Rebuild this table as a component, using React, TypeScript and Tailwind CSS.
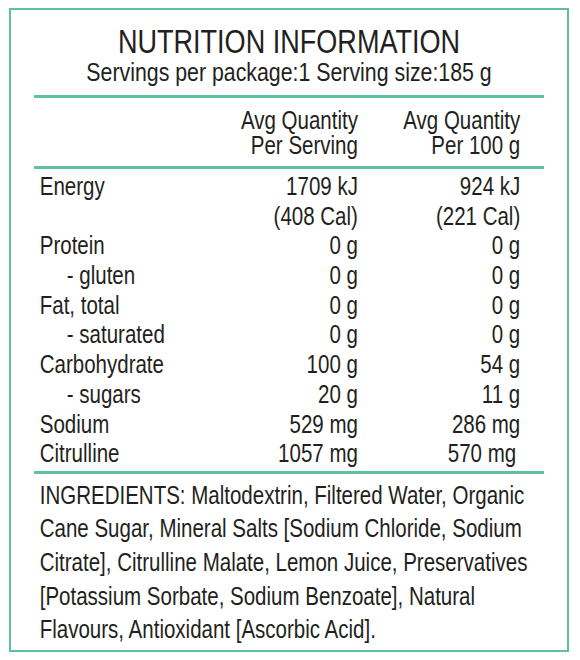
import React from "react";

const rows: { label: string; indent?: boolean; a: string; b: string }[] = [
  { label: "Energy", a: "1709 kJ", b: "924 kJ" },
  { label: "", a: "(408 Cal)", b: "(221 Cal)" },
  { label: "Protein", a: "0 g", b: "0 g" },
  { label: "- gluten", indent: true, a: "0 g", b: "0 g" },
  { label: "Fat, total", a: "0 g", b: "0 g" },
  { label: "- saturated", indent: true, a: "0 g", b: "0 g" },
  { label: "Carbohydrate", a: "100 g", b: "54 g" },
  { label: "- sugars", indent: true, a: "20 g", b: "11 g" },
  { label: "Sodium", a: "529 mg", b: "286 mg" },
  { label: "Citrulline", a: "1057 mg", b: "570 mg" },
];

export default function App() {
  return (
    <div className="w-[580px] h-[660px] bg-white pt-[8px] pl-[9px] text-[#231f20] font-['Liberation_Sans',Arial,sans-serif]">
      <div className="w-[560px] h-[644px] border-2 border-[#5fbf9f] px-[23px] overflow-hidden">
        <div className="w-[622px] origin-left scale-x-[0.82]">
          <div className="pt-[15px] text-center">
            <h1 className="text-[33px] leading-[34px]">NUTRITION INFORMATION</h1>
            <p className="text-[26px] leading-[26px]">Servings per package:1 Serving size:185 g</p>
          </div>
          <div className="mt-[10px] h-[3px] bg-[#5fbf9f]" />
          <div className="grid grid-cols-[1fr_160px_198px] pr-[29px] pt-[10px] text-[25px] leading-[25px]">
            <div />
            <div className="text-right">
              Avg Quantity
              <br />
              Per Serving
            </div>
            <div className="text-right">
              Avg Quantity
              <br />
              Per 100 g
            </div>
          </div>
          <div className="mt-[8px] h-[3px] bg-[#5fbf9f]" />
          <div className="pt-[3px] pr-[29px] text-[25px] leading-[29.7px]">
            {rows.map((r, i) => (
              <div key={i} className="grid grid-cols-[1fr_160px_198px] h-[29.7px]">
                <div className={r.indent ? "pl-[40px]" : "pl-[7px]"}>{r.label}</div>
                <div className="text-right">{r.a}</div>
                <div className={i === rows.length - 1 ? "text-right pr-[5px]" : "text-right"}>{r.b}</div>
              </div>
            ))}
          </div>
          <div className="mt-[2px] h-[3px] bg-[#5fbf9f]" />
          <p className="pt-[5px] pl-[7px] text-[25px] leading-[33.6px] whitespace-nowrap">
            INGREDIENTS: Maltodextrin, Filtered Water, Organic
            <br />
            Cane Sugar, Mineral Salts [Sodium Chloride, Sodium
            <br />
            Citrate], Citrulline Malate, Lemon Juice, Preservatives
            <br />
            [Potassium Sorbate, Sodium Benzoate], Natural
            <br />
            Flavours, Antioxidant [Ascorbic Acid].
          </p>
        </div>
      </div>
    </div>
  );
}
